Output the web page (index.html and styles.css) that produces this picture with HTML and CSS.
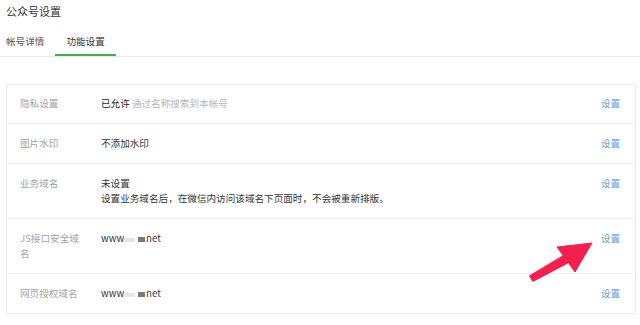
FILE: index.html
```html
<!DOCTYPE html>
<html lang="zh">
<head>
<meta charset="utf-8">
<title>公众号设置</title>
<link rel="stylesheet" href="styles.css">
</head>
<body>
<div class="page">
  <div class="title">公众号设置</div>
  <div class="tabs">
    <div class="tab tab-first">帐号详情</div>
    <div class="tab tab-active">功能设置</div>
  </div>
  <div class="card">
    <div class="row row-first">
      <div class="label">隐私设置</div>
      <div class="value"><span class="strong">已允许</span> <span class="muted">通过名称搜索到本帐号</span></div>
      <div class="link">设置</div>
    </div>
    <div class="row">
      <div class="label">图片水印</div>
      <div class="value">不添加水印</div>
      <div class="link">设置</div>
    </div>
    <div class="row">
      <div class="label">业务域名</div>
      <div class="value">未设置<br>设置业务域名后，在微信内访问该域名下页面时，不会被重新排版。</div>
      <div class="link">设置</div>
    </div>
    <div class="row">
      <div class="label">JS接口安全域名</div>
      <div class="value">www<span class="blur"></span><span class="mask"></span>net</div>
      <div class="link">设置</div>
    </div>
    <div class="row row-last">
      <div class="label">网页授权域名</div>
      <div class="value">www<span class="blur"></span><span class="mask"></span>net</div>
      <div class="link">设置</div>
    </div>
  </div>
  <svg class="arrow" width="80" height="50" viewBox="0 0 80 50">
    <path d="M10 41 L45 20 L49 27 L13 46 Z" fill="#f2204e" stroke="#f2204e" stroke-width="1.5" stroke-linejoin="round"/>
    <path d="M37 12 L72 8 L55 37 Z" fill="#f2204e" stroke="#f2204e" stroke-width="1" stroke-linejoin="round"/>
  </svg>
</div>
</body>
</html>
```

FILE: styles.css
```css
* { box-sizing: border-box; }
html, body { margin: 0; padding: 0; background: #fff; }
body {
  font-family: "Noto Sans CJK SC", "Noto Sans", sans-serif;
  color: #353535;
  width: 640px;
  height: 325px;
  overflow: hidden;
}
.page { position: relative; width: 640px; height: 325px; }
.title {
  font-size: 11px;
  line-height: 22px;
  padding-left: 6px;
  color: #353535;
}
.tabs {
  display: flex;
  padding-left: 6px;
  border-bottom: 1px solid #ececec;
  height: 35px;
}
.tab {
  font-size: 9.6px;
  line-height: 14px;
  padding: 12px 11px 6px;
  border-bottom: 2px solid transparent;
  color: #555;
}
.tab-first { padding-left: 0; padding-right: 11px; }
.tab-active { border-bottom-color: #3db24b; color: #353535; }
.card {
  margin: 27px 4px 0 6px;
  border: 1px solid #ebebeb;
  font-size: 9.6px;
  line-height: 15px;
}
.row {
  display: flex;
  align-items: flex-start;
  padding: 12px 15px 12px 13px;
  border-bottom: 1px solid #f0f0f0;
}
.row-first { padding-top: 11px; }
.row-last { border-bottom: none; }
.label {
  width: 64px;
  margin-right: 17px;
  color: #a3a3a3;
  flex: none;
}
.value { flex: 1; color: #353535; }
.strong { color: #222; }
.muted { color: #b5b5b5; }
.link { color: #5ea2dc; flex: none; }
.blur {
  display: inline-block;
  width: 11px;
  height: 4px;
  background: #e6e6e6;
  margin: 0 3px 0 0;
  vertical-align: 0;
}
.mask {
  display: inline-block;
  width: 7px;
  height: 5px;
  background: #7a7a7a;
  margin-right: 1px;
  vertical-align: 0;
}
.arrow { position: absolute; left: 520px; top: 235px; }
```
